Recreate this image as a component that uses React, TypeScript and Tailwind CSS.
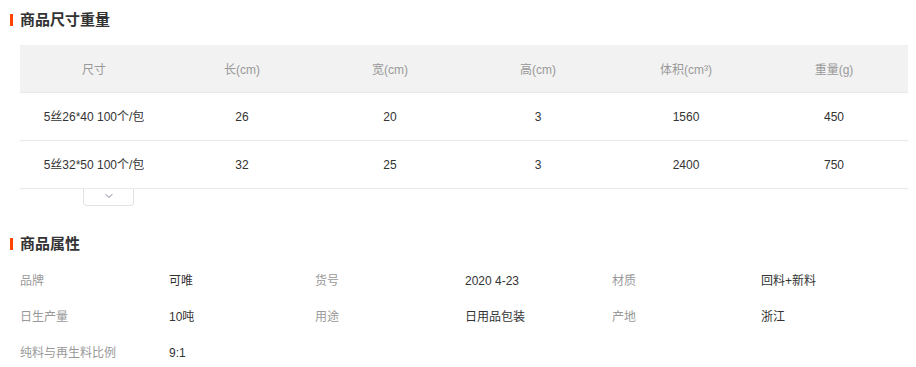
import { ChevronDown } from "lucide-react";

const HEAD = ["尺寸", "长(cm)", "宽(cm)", "高(cm)", "体积(cm³)", "重量(g)"];

const ROWS = [
  ["5丝26*40 100个/包", "26", "20", "3", "1560", "450"],
  ["5丝32*50 100个/包", "32", "25", "3", "2400", "750"],
];

const ATTRS = [
  ["品牌", "可唯"],
  ["货号", "2020 4-23"],
  ["材质", "回料+新料"],
  ["日生产量", "10吨"],
  ["用途", "日用品包装"],
  ["产地", "浙江"],
  ["纯料与再生料比例", "9:1"],
];

function Title({ text }: { text: string }) {
  return (
    <div className="flex items-center h-[24px] pl-[10px]">
      <span className="w-[3px] h-[12px] bg-[#ff4400] mr-[7px]" />
      <span className="text-[15px] font-bold text-[#333]">{text}</span>
    </div>
  );
}

export default function App() {
  return (
    <div
      className="w-[916px] h-[367px] bg-white overflow-hidden"
      style={{ fontFamily: '"Liberation Sans", "Noto Sans CJK SC", sans-serif' }}
    >
      <div className="pt-[8px]">
        <Title text="商品尺寸重量" />
      </div>

      {/* Size table */}
      <div className="mx-[20px] mt-[13px] w-[888px]">
        <div className="grid grid-cols-6 h-[48px] pt-[2px] bg-[#f2f2f2] border-b border-[#e8e8e8] items-center text-center text-[12px] text-[#999]">
          {HEAD.map(h => (
            <div key={h}>{h}</div>
          ))}
        </div>
        {ROWS.map((r, i) => (
          <div
            key={i}
            className="grid grid-cols-6 h-[48px] pt-[1px] border-b border-[#e8e8e8] items-center text-center text-[12px] text-[#333]"
          >
            {r.map((c, j) => (
              <div key={j}>{c}</div>
            ))}
          </div>
        ))}
        <div className="ml-[63px] w-[51px] h-[17px] border border-t-0 border-[#e3e3e3] rounded-b-[4px] flex justify-center pt-[1px]">
          <ChevronDown size={12} strokeWidth={2} className="text-[#7a8296]" />
        </div>
      </div>

      <div className="mt-[26px]">
        <Title text="商品属性" />
      </div>

      {/* Attributes */}
      <div className="ml-[20px] mt-[6px] grid grid-cols-[149px_146px_150px_147px_149px_148px] text-[12px]">
        {ATTRS.map(([k, v]) => (
          <div key={k} className="contents">
            <div className="h-[36px] pt-[2px] flex items-center text-[#999]">{k}</div>
            <div className="h-[36px] pt-[2px] flex items-center text-[#333]">{v}</div>
          </div>
        ))}
      </div>
    </div>
  );
}
